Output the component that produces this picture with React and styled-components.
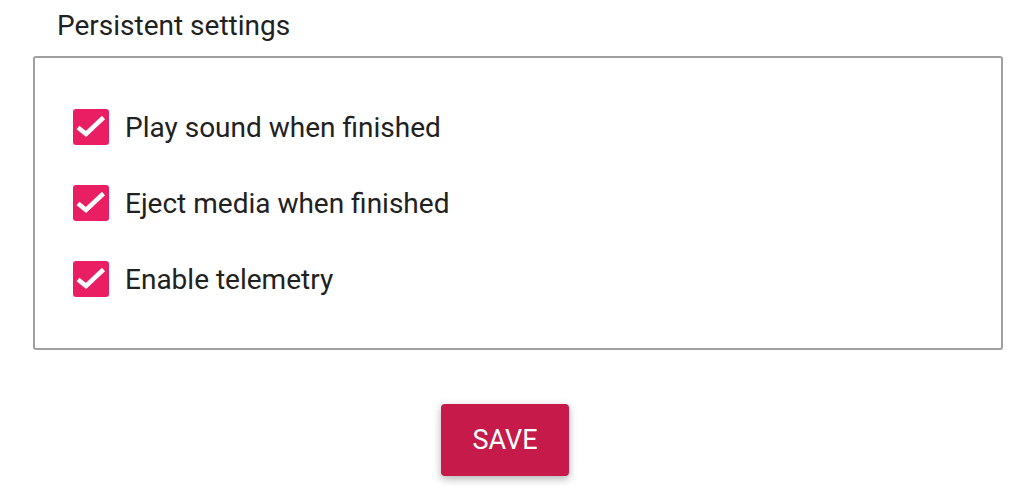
import React, { useState } from 'react';
import styled, { createGlobalStyle } from 'styled-components';

const GlobalStyle = createGlobalStyle`
  html, body {
    margin: 0;
    padding: 0;
    background: #ffffff;
    font-family: Roboto, "Noto Sans", sans-serif;
  }
`;

const Page = styled.div`
  width: 1036px;
  height: 488px;
  box-sizing: border-box;
  padding: 8px 33px 0 33px;
  display: flex;
  flex-direction: column;
`;

const GroupTitle = styled.div`
  font-size: 28px;
  color: #212121;
  line-height: 36px;
  padding-left: 24px;
  margin-bottom: 12px;
`;

const GroupBox = styled.div`
  width: 970px;
  height: 294px;
  box-sizing: border-box;
  border: 2px solid #a0a0a0;
  border-radius: 3px;
  padding: 51px 0 0 38px;
  display: flex;
  flex-direction: column;
  gap: 40px;
`;

const Row = styled.label`
  display: flex;
  align-items: center;
  gap: 16px;
  cursor: pointer;
  height: 36px;
`;

const Box = styled.span`
  width: 36px;
  height: 36px;
  border-radius: 3px;
  background: ${(p) => (p.checked ? '#e91e63' : '#ffffff')};
  border: ${(p) => (p.checked ? 'none' : '2px solid #757575')};
  box-sizing: border-box;
  display: flex;
  flex-shrink: 0;
`;

const Label = styled.span`
  font-size: 28px;
  color: #212121;
`;

const Footer = styled.div`
  display: flex;
  justify-content: center;
  padding: 54px 26px 0 0;
`;

const SaveButton = styled.button`
  width: 128px;
  height: 72px;
  border: none;
  border-radius: 4px;
  background: #c51a4a;
  color: #ffffff;
  font-family: Roboto, sans-serif;
  font-size: 27px;
  box-shadow: 0 3px 8px rgba(0, 0, 0, 0.3);
  cursor: pointer;
`;

const Check = () => (
  <svg width="36" height="36" viewBox="0 0 36 36">
    <path
      d="M5 18.5 L13 25 L30.5 8.5"
      fill="none"
      stroke="#ffffff"
      strokeWidth="4.5"
      strokeLinejoin="miter"
    />
  </svg>
);

const SettingRow = ({ label, checked, onToggle }) => (
  <Row onClick={onToggle}>
    <Box checked={checked}>{checked && <Check />}</Box>
    <Label>{label}</Label>
  </Row>
);

const App = () => {
  const [settings, setSettings] = useState({
    sound: true,
    eject: true,
    telemetry: true,
  });

  const toggle = (key) => setSettings((s) => ({ ...s, [key]: !s[key] }));

  return (
    <>
      <GlobalStyle />
      <Page>
        <GroupTitle>Persistent settings</GroupTitle>
        <GroupBox>
          <SettingRow label="Play sound when finished" checked={settings.sound} onToggle={() => toggle('sound')} />
          <SettingRow label="Eject media when finished" checked={settings.eject} onToggle={() => toggle('eject')} />
          <SettingRow label="Enable telemetry" checked={settings.telemetry} onToggle={() => toggle('telemetry')} />
        </GroupBox>
        <Footer>
          <SaveButton>SAVE</SaveButton>
        </Footer>
      </Page>
    </>
  );
};

export default App;
